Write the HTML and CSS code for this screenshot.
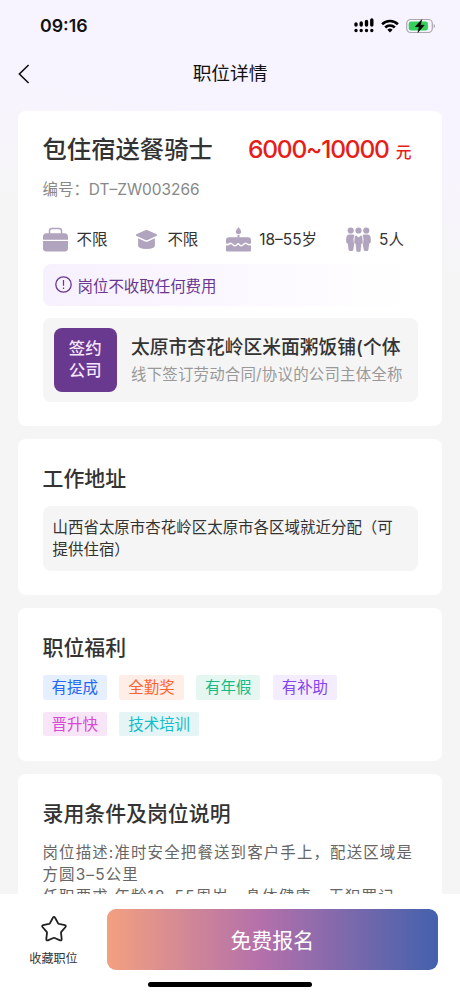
FILE: index.html
```html
<!DOCTYPE html>
<html lang="zh-CN">
<head>
<meta charset="utf-8">
<title>职位详情</title>
<link rel="stylesheet" href="styles.css">
</head>
<body>
<div class="phone">
  <header class="status">
    <span class="time">09:16</span>
    <div class="status-icons">
      <svg class="signal" width="20" height="15" viewBox="0 0 20 15">
        <g stroke="#000" stroke-width="3.4" stroke-linecap="round">
          <path d="M2 6v1M7.2 5v2M12.5 3.5v3.5M17.8 2v5M2 12.4v.1M7.2 12.4v.1M12.5 12.4v.1M17.8 12.4v.1"/>
        </g>
      </svg>
      <svg class="wifi" width="18" height="14" viewBox="0 0 18 14">
        <g fill="none" stroke="#000" stroke-width="2.6"><path d="M1.1 5.2a11.3 11.3 0 0 1 15.8 0M4.2 8.5a6.9 6.9 0 0 1 9.6 0"/></g>
        <path d="M9 13.4l-2.6-2.7a3.8 3.8 0 0 1 5.2 0z"/>
      </svg>
      <svg class="battery" width="30" height="16" viewBox="0 0 30 16">
        <rect x=".7" y="1.5" width="25.6" height="13" rx="4" fill="none" stroke="#aaa7b0" stroke-width="1.2"/>
        <rect x="2.7" y="3.4" width="19.200" height="9.200" rx="2.4" fill="#34cf5d"/>
        <path d="M27.700 6v4.200q1.300-.6 1.300-2.100T27.700 6z" fill="#aaa7b0"/>
        <path d="M15.800 1.600L9.300 8.700h3.900l-1.300 5.700 6.300-7.200h-3.800z" fill="#000" stroke="#000" stroke-width=".5"/>
      </svg>
    </div>
  </header>
  <nav class="nav">
    <svg class="back" width="12" height="20" viewBox="0 0 12 20"><path d="M10.600 1L1.400 10l9.200 9" fill="none" stroke="#111" stroke-width="1.600"/></svg>
    <h1 class="nav-title">职位详情</h1>
  </nav>

  <main class="content">
    <section class="card summary">
      <div class="headline">
        <h2 class="job">包住宿送餐骑士</h2>
        <div class="salary">6000~10000<span class="unit">元</span></div>
      </div>
      <p class="code">编号：DT–ZW003266</p>
      <ul class="facts">
        <li class="fact">
          <svg width="25" height="25" viewBox="0 0 25 25" fill="#b1a4bf">
            <path d="M6.500 7V3.800Q6.500 1.400 9 1.400h7q2.500 0 2.500 2.400V7" fill="none" stroke="#b1a4bf" stroke-width="1.500"/>
            <path d="M0 12.700V9.800Q0 6.200 3.600 6.200h17.800Q25 6.200 25 9.800v2.900zM0 14h25v7.200q0 3.300-3.600 3.300H3.600Q0 24.500 0 21.200z"/>
          </svg><span>不限</span></li>
        <li class="fact">
          <svg width="23" height="25" viewBox="0 0 23 25" fill="#b1a4bf">
            <path d="M10.300 3.300q1.200-.5 2.400 0l9 3.900q1.100.8 0 1.600l-9 4.300q-1.200.5-2.400 0l-9-4.300q-1.100-.8 0-1.600z"/>
            <path d="M3.100 11.200l7 3.200q1.400.6 2.800 0l7-3.200v7.400q0 3.400-8.400 3.400t-8.400-3.400z"/>
          </svg><span>不限</span></li>
        <li class="fact cake">
          <svg width="25" height="25" viewBox="0 0 25 25" fill="#b1a4bf">
            <path d="M12.500 0c4 4.800 3.200 7 0 7s-4-2.200 0-7zM11.500 7.800h2v3h-2z"/>
            <path d="M0 16.300v-3q0-3 3-3h19q3 0 3 3v3c-2.500 1.800-3.700-.8-5.500-.8-2 0-2.500 2.500-4.300 2.500-1.500 0-1.500-2-3-2s-1.500 2-3.200 2c-2 0-2.500-2.500-4.500-2.500-1.800 0-2.500 2.200-4.500.8z"/>
            <path d="M0 18.300c2.500 1 3.500-1.100 4.600-1.100 1.700 0 2.400 2.400 4.400 2.400s2.200-1.800 3.300-1.800 1.100 1.800 3 1.800c2.200 0 2.800-2.500 4.200-2.500 1.300 0 2.500 2.300 5.500 1.200v5.200q0 1-1 1H1q-1 0-1-1z"/>
          </svg><span>18–55岁</span></li>
        <li class="fact people">
          <svg width="25" height="26" viewBox="0 0 25 26" fill="#b1a4bf">
            <circle cx="4.700" cy="3.500" r="3.100"/><circle cx="12.500" cy="3.500" r="3.100"/><circle cx="20.300" cy="3.500" r="3.100"/>
            <path d="M3.500 7.500h3.700q1.300.2 1.200 1.300-.9 1.500-.8 4l.7 3.800-1 6.200q-.3 1.200-1.500 1.200H4q-1.200 0-1.400-1.200l-.8-6L.3 15.500Q-.4 10 1.500 8q.8-.6 2-.5zM21.500 7.500h-3.700q-1.300.2-1.200 1.300.9 1.500.8 4l-.7 3.800 1 6.200q.3 1.200 1.500 1.200H21q1.200 0 1.400-1.200l.8-6 1.500-1.300Q25.400 10 23.500 8q-.8-.6-2-.5z"/>
            <path d="M10.200 8.200l2.300 2 2.300-2q1.500.1 1.700 1.800l.6 6-1.500 1-.7 6.800q-.2 1.300-1.400 1.300h-2q-1.200 0-1.400-1.300L9.400 17l-1.500-1 .6-6q.2-1.700 1.700-1.800z" stroke="#fff" stroke-width=".5"/>
          </svg><span>5人</span></li>
      </ul>
      <div class="notice">
        <svg width="17" height="17" viewBox="0 0 17 17"><circle cx="8.500" cy="8.500" r="7.700" fill="none" stroke="#69378f" stroke-width="1.300"/><path d="M8.500 4v5.700M8.500 11.500v1.500" stroke="#69378f" stroke-width="1.200"/></svg>
        <span>岗位不收取任何费用</span>
      </div>
      <div class="company">
        <div class="badge">签约<br>公司</div>
        <div class="company-text">
          <div class="company-name">太原市杏花岭区米面粥饭铺(个体</div>
          <div class="company-sub">线下签订劳动合同/协议的公司主体全称</div>
        </div>
      </div>
    </section>

    <section class="card location">
      <h2 class="title">工作地址</h2>
      <p class="address">山西省太原市杏花岭区太原市各区域就近分配（可提供住宿）</p>
    </section>

    <section class="card benefits">
      <h2 class="title">职位福利</h2>
      <div class="tags">
        <span class="tag blue">有提成</span>
        <span class="tag orange">全勤奖</span>
        <span class="tag green">有年假</span>
        <span class="tag violet">有补助</span>
        <span class="tag pink">晋升快</span>
        <span class="tag teal">技术培训</span>
      </div>
    </section>

    <section class="card details">
      <h2 class="title">录用条件及岗位说明</h2>
      <p class="description">岗位描述:准时安全把餐送到客户手上，配送区域是<br>方圆3–5公里<br>任职要求:年龄18–55周岁，身体健康，无犯罪记</p>
    </section>
  </main>

  <footer class="bar">
    <div class="actions">
      <div class="favorite">
        <svg width="26" height="26" viewBox="0 0 26 26"><path d="M11.900 1.700q1.100-1.500 2.200 0l3 5.500q.3.500 1 .7l5.700 1.200q1.600.5.700 1.900l-4.200 4.800q-.4.500-.3 1.100l.7 6.200q0 1.800-1.600 1.200l-5.400-2.300q-.7-.3-1.400 0l-5.400 2.300q-1.600.6-1.600-1.200l.7-6.200q.1-.6-.3-1.100L1.500 11q-.9-1.400.7-1.900l5.700-1.200q.7-.2 1-.7z" fill="none" stroke="#222" stroke-width="1.800"/></svg>
        <span>收藏职位</span>
      </div>
      <button class="apply">免费报名</button>
    </div>
    <div class="home"></div>
  </footer>
</div>
</body>
</html>
```

FILE: styles.css
```css
* { box-sizing: border-box; margin: 0; padding: 0; }

body {
  font-family: Inter, "Noto Sans CJK SC", sans-serif;
  font-size: 15.45px;
  color: #333;
}

.phone {
  display: flex;
  flex-direction: column;
  height: 997px;
  overflow: hidden;
  background: linear-gradient(190deg, #f8f4ff 150px, #f5f5f5 285px);
}

.status {
  display: flex;
  flex: none;
  justify-content: space-between;
  height: 50px;
  padding: 16px 24px 0 40px;
}

.time { font-size: 17.800px; font-weight: 600; line-height: 20px; color: #111; }
.status-icons { display: flex; align-items: center; height: 19px; }
.wifi { margin-left: 7px; }
.battery { margin-left: 7px; }

.nav {
  display: grid;
  flex: none;
  grid-template-columns: 50px 1fr 50px;
  align-items: center;
  height: 48px;
  margin-bottom: 12.500px;
}

.back { margin-left: 18px; }
.nav-title { font-size: 18.700px; font-weight: 400; line-height: 26px; text-align: center; color: #111; }

.content {
  display: flex;
  flex: 1;
  flex-direction: column;
  gap: 12.500px;
  min-height: 0;
  padding: 0 18px;
  overflow: hidden;
}

.card { flex: none; padding: 0 24.500px; border-radius: 8px; background: #fff; }
.summary { height: 315.500px; padding-top: 21px; }
.location { height: 156.500px; padding-top: 25.500px; }
.benefits { height: 153.500px; padding-top: 25.500px; }
.details { height: 180px; padding-top: 25.500px; }

.headline { display: flex; justify-content: space-between; align-items: baseline; height: 34px; line-height: 34px; }
.job { font-size: 24.350px; font-weight: 500; white-space: nowrap; }
.salary { padding-right: 6px; font-size: 24.600px; font-weight: 500; letter-spacing: -1.250px; color: #e71d19; white-space: nowrap; }
.unit { margin-left: 7px; font-size: 15.800px; letter-spacing: 0; }
.code { height: 22px; margin-top: 13px; line-height: 22px; color: #888; }

.facts { display: flex; height: 26px; margin-top: 26px; list-style: none; }
.fact { display: flex; align-items: center; gap: 9px; line-height: 22px; white-space: nowrap; }
.fact span { padding-top: 1px; }
.fact + .fact { margin-left: 28px; }
.cake { gap: 8px; }
.fact + .people { margin-left: 29px; }
.people { gap: 8px; }

.notice {
  display: flex;
  align-items: center;
  gap: 6px;
  height: 42px;
  margin-top: 11px;
  padding-left: 12px;
  border-radius: 8px;
  background: linear-gradient(90deg, #f7f0ff, #fff);
  color: #69378f;
}

.company {
  display: flex;
  align-items: center;
  height: 83.500px;
  margin-top: 12.500px;
  padding-left: 11px;
  border-radius: 8px;
  background: #f5f5f5;
}

.badge {
  flex: none;
  width: 63.500px;
  height: 63.500px;
  padding-top: 10px;
  border-radius: 8px;
  background: #69388f;
  color: #f6e6ff;
  font-size: 16.400px;
  font-weight: 500;
  line-height: 21.500px;
  text-align: center;
}

.company-text { margin-left: 14px; white-space: nowrap; }
.company-name { font-size: 18.750px; font-weight: 500; line-height: 30px; }
.company-sub { letter-spacing: .200px; line-height: 24px; color: #999; }

.title { font-size: 20.900px; font-weight: 500; line-height: 30px; }

.address {
  height: 65px;
  margin-top: 12px;
  padding: 11px 20px 0 10px;
  border-radius: 8px;
  background: #f5f5f5;
  letter-spacing: .030px;
  line-height: 22.200px;
}

.tags { display: flex; flex-wrap: wrap; gap: 12.200px; margin-top: 12px; padding-right: 60px; }
.tag { height: 24.600px; padding: 1px 9.100px 0; border-radius: 2px; line-height: 24.600px; }
.blue { background: #e6efff; color: #2468f2; }
.orange { background: #ffeee8; color: #ff632d; }
.green { background: #e6f6f1; color: #15bb84; }
.violet { background: #f4edff; color: #8544ed; }
.pink { background: #f8e6f8; color: #d648d6; }
.teal { background: #e5f5f6; color: #12bdca; }

.description { margin-top: 13px; letter-spacing: 1.150px; line-height: 22.200px; color: #666; white-space: nowrap; }

.bar { display: flex; flex: none; flex-direction: column; height: 103px; padding: 14.500px 22.500px 0 0; background: #fff; }
.actions { display: flex; height: 61.500px; }
.favorite { display: flex; flex: none; flex-direction: column; align-items: center; width: 107px; padding-top: 7px; font-size: 12.100px; line-height: 18px; }
.favorite span { margin-top: 8px; }

.apply {
  flex: 1;
  border: 0;
  border-radius: 9px;
  background: linear-gradient(90deg, #f3a080, #b370ab 47%, #4361ad);
  color: #fff;
  font: 400 20.900px Inter, "Noto Sans CJK SC", sans-serif;
}

.home { width: 164px; height: 5px; margin: 12px 0 0 148px; border-radius: 3px; background: #000; }
```
